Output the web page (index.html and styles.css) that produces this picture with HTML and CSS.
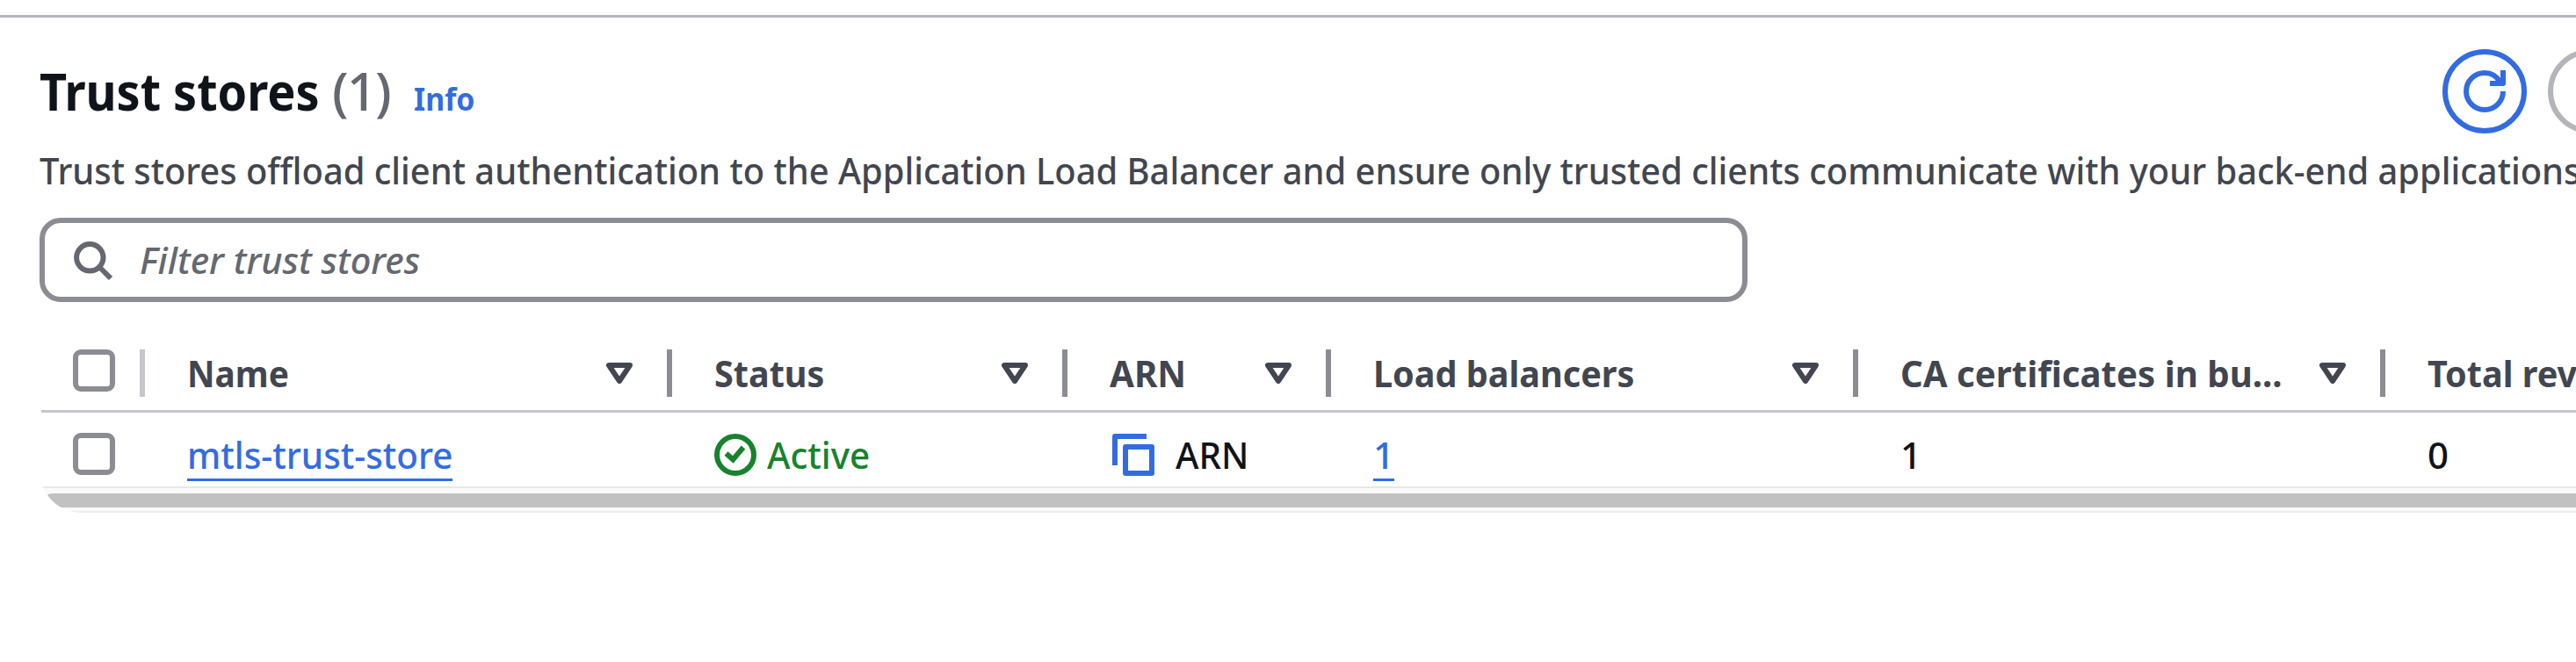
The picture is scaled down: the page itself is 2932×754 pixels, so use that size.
FILE: index.html
```html
<!DOCTYPE html>
<html lang="en">
<head>
<meta charset="utf-8">
<title>Trust stores</title>
<link rel="stylesheet" href="styles.css">
</head>
<body>
<main class="panel">
  <header class="header">
    <h2 class="title"><span class="title-text">Trust stores</span><span class="count">(1)</span><a class="info">Info</a></h2>
    <div class="actions">
      <button class="button" aria-label="Refresh">
        <svg width="48" height="48" viewBox="0 0 48 48" fill="none" stroke="currentColor" stroke-width="6"><path d="M45 24A21 21 0 1 1 24 3C32 3 38 7 42 14"/><path d="M45 0V15H30" stroke-linejoin="round"/></svg>
      </button>
      <button class="button button-disabled" aria-label="Actions"></button>
    </div>
  </header>
  <p class="description"><span class="description-text">Trust stores offload client authentication to the Application Load Balancer and ensure only trusted clients communicate with your back-end applications</span></p>
  <div class="search">
    <svg class="search-icon" width="48" height="48" viewBox="0 0 48 48" fill="none" stroke="currentColor" stroke-width="6"><circle cx="21.3" cy="21.3" r="15.2"/><path d="M32 32L45 45"/></svg>
    <span class="placeholder">Filter trust stores</span>
  </div>
  <section class="table">
    <div class="row head">
      <div class="cell select"><span class="checkbox"></span><i class="divider light"></i></div>
      <div class="cell"><span class="label label-name">Name</span><svg class="sort" viewBox="0 0 30 24"><path d="M3 3H27L15 21Z"/></svg><i class="divider"></i></div>
      <div class="cell"><span class="label">Status</span><svg class="sort" viewBox="0 0 30 24"><path d="M3 3H27L15 21Z"/></svg><i class="divider"></i></div>
      <div class="cell"><span class="label label-arn">ARN</span><svg class="sort" viewBox="0 0 30 24"><path d="M3 3H27L15 21Z"/></svg><i class="divider"></i></div>
      <div class="cell"><span class="label">Load balancers</span><svg class="sort" viewBox="0 0 30 24"><path d="M3 3H27L15 21Z"/></svg><i class="divider"></i></div>
      <div class="cell"><span class="label label-ca">CA certificates in bu...</span><svg class="sort" viewBox="0 0 30 24"><path d="M3 3H27L15 21Z"/></svg><i class="divider"></i></div>
      <div class="cell"><span class="label">Total rev</span></div>
    </div>
    <div class="row body">
      <div class="cell select"><span class="checkbox"></span></div>
      <div class="cell"><a class="link value">mtls-trust-store</a></div>
      <div class="cell status"><svg width="48" height="48" viewBox="0 0 48 48" fill="none" stroke="currentColor" stroke-width="6"><circle cx="24" cy="24" r="21"/><path d="M13.5 22.5L21.3 29.5L33 15.5"/></svg><span class="value">Active</span></div>
      <div class="cell arn"><svg width="48" height="48" viewBox="0 0 48 48" fill="none" stroke="currentColor" stroke-width="6" stroke-linejoin="round"><path d="M3 36V3H39"/><path d="M15 15H45V45H15Z"/></svg><span class="value">ARN</span></div>
      <div class="cell"><a class="link">1</a></div>
      <div class="cell"><span>1</span></div>
      <div class="cell"><span>0</span></div>
    </div>
    <div class="scrollbar"><div class="thumb"></div></div>
  </section>
</main>
</body>
</html>
```
FILE: styles.css
```css
* { box-sizing: border-box; }
body {
  margin: 0;
  width: 2932px;
  height: 754px;
  padding-top: 17px;
  overflow: hidden;
  background: #fff;
  color: #0f141a;
  font: 500 42px/54px "Noto Sans", "Open Sans", sans-serif;
  white-space: nowrap;
}
.panel { width: 2932px; overflow: hidden; border-top: 3px solid #b4b4bb; padding: 36px 0 0 45px; }
.header { display: flex; justify-content: space-between; height: 96px; }
.title { display: flex; align-items: baseline; margin: 0; font-size: 60px; line-height: 94px; font-weight: 700; }
.title-text { width: 333px; transform: scaleX(0.899); transform-origin: left; }
.count { width: 93px; color: #656871; font-weight: 500; letter-spacing: -2px; }
.info { color: #336ce1; font-size: 36px; transform: scaleX(0.94); transform-origin: left; }
.actions { display: flex; gap: 24px; width: 152px; flex: none; }
.button {
  display: flex; align-items: center; justify-content: center; flex: none;
  width: 96px; height: 96px; padding: 0;
  border: 6px solid currentColor; border-radius: 48px;
  background: none; color: #336ce1;
}
.button-disabled { width: 300px; color: #b4b4bb; }
.description { margin: 12px 0 24px; line-height: 60px; color: #424650; }
.description-text { display: inline-block; transform: scaleX(0.949); transform-origin: left; }
.search {
  display: flex; align-items: center; width: 1944px; height: 96px;
  padding-left: 30px; border: 6px solid #8c8c94; border-radius: 24px; color: #656871;
}
.search-icon { margin-right: 30px; }
.placeholder { font-style: italic; transform: scaleX(0.988); transform-origin: left; }
.table { margin-top: 30px; height: 210px; overflow: hidden; border-radius: 0 0 0 48px; }
.row { display: grid; grid-template-columns: 120px 600px 450px 300px 600px 600px 600px; }
.head { height: 96px; padding-top: 24px; border-bottom: 3px solid #c6c6cd; color: #424650; font-weight: 700; clip-path: inset(0 0 0 2px); }
.body { height: 84px; padding-top: 21px; }
.cell { display: flex; align-items: flex-start; height: 54px; padding-left: 48px; }
.select { padding-left: 38px; }
.checkbox { width: 48px; height: 48px; border: 6px solid #8c8c94; border-radius: 9px; }
.body .checkbox { margin-top: 2px; }
.divider { width: 6px; height: 54px; background: #8c8c94; }
.light { margin-left: 28px; background: #c6c6cd; }
.sort { width: 30px; height: 24px; margin: 15px 39px 0 auto; fill: none; stroke: #424650; stroke-width: 6px; stroke-linejoin: round; }
.label { transform: scaleX(0.942); transform-origin: left; }
.label-name { transform: scaleX(0.924); }
.label-arn { transform: scaleX(0.96); }
.label-ca { transform: scaleX(0.957); }
.value { transform: scaleX(0.962); transform-origin: left; }
.link { height: 57px; border-bottom: 3px solid #336ce1; color: #336ce1; }
.status { color: #17832c; }
.status svg { margin: 3px 12px 0 0; }
.arn svg { margin: 3px 24px 0 3px; color: #336ce1; }
.scrollbar {
  height: 30px; padding-top: 6px;
  border-top: 2px solid #e8e8e8; border-bottom: 2px solid #ededed; background: #fafafa;
}
.thumb { height: 16px; margin-left: 6px; border-radius: 8px 0 0 8px; background: #c1c1c1; }
```
